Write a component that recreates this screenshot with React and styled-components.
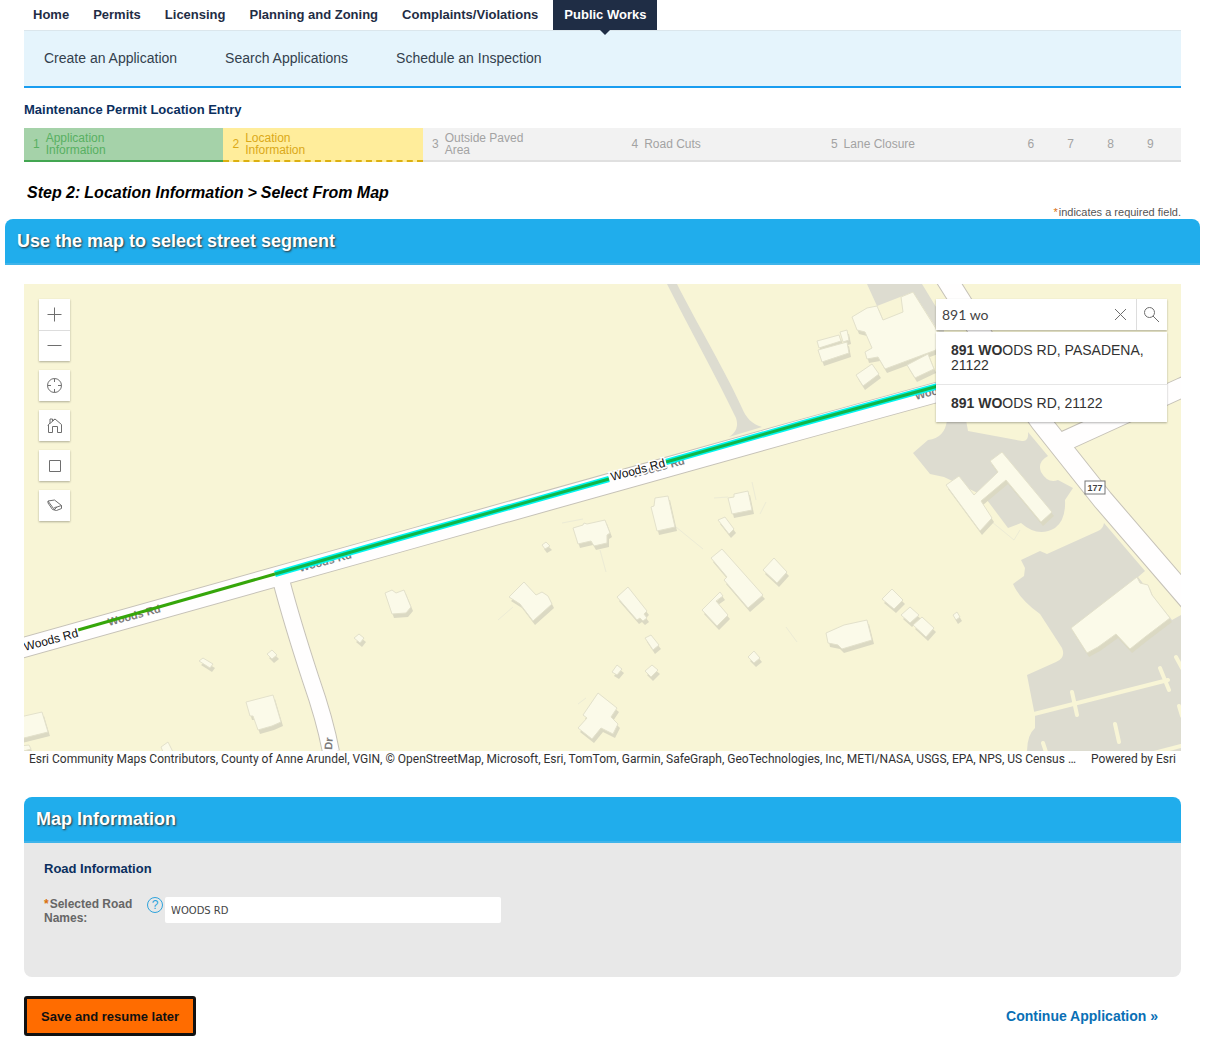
import { useState } from 'react';
// import styled components
import styled, { createGlobalStyle } from 'styled-components';

// page data
const tabs = ['Home', 'Permits', 'Licensing', 'Planning and Zoning', 'Complaints/Violations', 'Public Works'];
const links = ['Create an Application', 'Search Applications', 'Schedule an Inspection'];
const steps = [
  { label: 'Application Information', state: 'done' },
  { label: 'Location Information', state: 'current' },
  { label: 'Outside Paved Area' },
  { label: 'Road Cuts' },
  { label: 'Lane Closure' },
  {},
  {},
  {},
  {},
];
const suggestions = ['891 WOODS RD, PASADENA, 21122', '891 WOODS RD, 21122'];

// building footprints, in map units
const buildings = [
  '573,528 583,525 584,523 587,524 605,520 610,533 607,535 607,543 594,546 591,541 578,544',
  '655,498 668,496 675,527 657,531 651,507 654,506',
  '728,498 734,497 734,494 748,491 752,510 732,514',
  '718,520 725,517 734,529 729,534',
  '711,558 722,549 763,595 748,608 724,580 727,577',
  '763,570 774,558 787,572 777,583',
  '702,610 720,592 723,596 716,601 728,615 717,626',
  '509,597 524,582 536,595 542,592 548,596 552,604 533,621 520,604',
  '617,597 628,587 647,611 644,614 647,618 643,621 640,618 637,620',
  '645,638 651,635 659,645 653,650',
  '612,672 617,665 622,669 617,675',
  '645,671 652,665 658,670 651,677',
  '598,693 617,708 611,717 618,724 613,734 601,728 592,739 578,728 587,718 583,715',
  '542,545 546,542 550,546 545,549',
  '748,657 754,651 760,658 754,663',
  '385,593 392,590 396,593 404,590 411,607 406,613 392,614',
  '199,661 203,658 213,664 210,668',
  '267,654 272,650 277,655 272,659',
  '354,638 359,634 364,638 360,643',
  '246,702 273,695 281,722 272,726 258,730 253,716 250,716',
  '20,717 42,712 48,732 20,739',
  '161,747 168,742 173,752 163,752',
  '20,746 29,745 31,749 20,752',
  '826,633 844,625 867,620 872,640 842,649 838,645 828,643',
  '882,599 892,589 903,600 894,609',
  '901,615 910,607 919,615 910,623',
  '913,625 922,617 934,628 926,637',
  '953,615 957,612 960,617 956,620',
  '1071,628 1137,577 1140,583 1148,585 1152,595 1170,618 1145,637 1130,649 1116,634 1098,647 1087,653',
  '852,317 867,308 877,306 883,320 903,312 901,297 913,292 940,335 936,350 885,369 878,357 867,359 865,352 872,348 865,332 857,330',
  '907,365 928,354 934,369 915,378',
  '856,375 872,364 879,374 863,386',
  '817,341 839,335 841,341 819,348',
  '818,350 847,342 849,353 822,362',
  '840,332 847,330 849,340 843,342',
  '946,485 959,476 974,495 998,472 990,461 1002,452 1052,512 1041,522 1006,480 981,501 992,518 980,531',
];

const roads = [
  { d: 'M1200 380L1181 388L1067 440L1056 446', width: 19 },
  { d: 'M281 580Q292 622 311 680Q325 720 331 752', width: 16 },
  { d: 'M0 654L400 542L800 430L960 386L1000 374', width: 19 },
  { d: 'M946 278L1000 364L1041 422L1103 500L1190 601', width: 20 },
];

const StreetMap = () => {
  return (
    <MapSvg viewBox="24 284 1157 467" preserveAspectRatio="xMidYMid slice" role="img" aria-label="Street map">
      <rect x="0" y="200" width="1300" height="640" fill="#f8f5d6" />
      {/* paved lots */}
      <g fill="#dddcd0">
        <path d="M867 284H922L944 320V340L913 292L877 306Z" />
        <path d="M947 420H966L968 431L1022 441Q1029 442 1028 432L1048 456Q1037 462 1041 472Q1048 484 1058 480L1073 488L1065 500Q1066 520 1055 528Q1038 538 1021 523L1008 528L984 496L944 477L930 474L913 453L928 440Q945 438 947 420Z" />
        <path d="M1104 523L1145 571L1138 577L1160 605L1172 620L1181 615V752H1027Q1027 735 1035 728L1035 716L1027 675L1056 662Q1066 658 1062 648L1040 614Q1020 600 1013 584L1024 576L1025 568L1021 560L1040 551L1047 554L1098 531Q1103 529 1104 523Z" />
        <path d="M667 284H677C694 318 728 376 742 408C746 418 752 424 762 427L729 437Q740 430 736 418C716 376 688 326 667 284Z" />
      </g>
      <g fill="none" stroke="#f8f5d6" strokeWidth="4" strokeLinecap="round">
        <path d="M1034 714L1168 680M1072 692L1077 715M1160 668L1169 690M1115 724L1119 742M1043 743L1046 752M1176 657L1182 668M1150 754L1181 746M1179 706L1182 716" />
      </g>
      {/* thin driveways */}
      <g fill="none" stroke="#ecebd5">
        <path d="M676 527L703 549M600 550L606 572M513 607L498 620M562 523L583 519M786 627L797 642M714 498L728 497M752 482L756 500M766 502L760 514M992 522L1014 540L1020 530M578 704L586 698" />
      </g>
      <g fill="#dbd9c3">
        {buildings.map((points) => (
          <polygon points={points} key={points} transform="translate(2 4)" />
        ))}
      </g>
      <g fill="#fbfae9" stroke="#e3e1cb">
        {buildings.map((points) => (
          <polygon points={points} key={points} />
        ))}
      </g>
      <g fill="none" stroke="#c6c2b8">
        {roads.map((road) => (
          <path d={road.d} strokeWidth={road.width + 2} key={road.d} />
        ))}
      </g>
      <g fill="none" stroke="#fffefe">
        {roads.map((road) => (
          <path d={road.d} strokeWidth={road.width} key={road.d} />
        ))}
      </g>
      <RoadLabel>
        <text transform="translate(109 626) rotate(-15)">Woods Rd</text>
        <text transform="translate(300 572) rotate(-15)">Woods Rd</text>
        <text transform="translate(633 478) rotate(-15)">Woods Rd</text>
        <text transform="translate(916 400) rotate(-15)">Woods Rd</text>
        <text transform="translate(332 750) rotate(-86)">Dr</text>
      </RoadLabel>
      <rect x="1085" y="481" width="20" height="13" fill="#fff" stroke="#777" />
      <Shield x="1095" y="491">177</Shield>
      {/* street segments, the selected one on a cyan band */}
      <g fill="none">
        <path d="M275 574L400 538L609 479M666 462L800 424L960 380" stroke="#00f5f0" strokeWidth="6" />
        <path d="M78 630L275 574" stroke="#36a60a" strokeWidth="3" />
        <path d="M275 574L400 538L609 479M666 462L800 424L960 380" stroke="#12b548" strokeWidth="3" />
      </g>
      <SegmentLabel>
        <text transform="translate(25 651) rotate(-15)">Woods Rd</text>
        <text transform="translate(612 481) rotate(-15)">Woods Rd</text>
      </SegmentLabel>
    </MapSvg>
  );
};

// map tool icons
const Icon = ({ d }) => (
  <IconSvg viewBox="0 0 16 16" aria-hidden="true">
    <path d={d} />
  </IconSvg>
);
const icons = {
  plus: 'M7.5 0.5V14.5M0.5 7.5H14.5',
  minus: 'M0.5 7.5H14.5',
  locate: 'M14.5 7.5A7 7 0 1 1 0.5 7.5A7 7 0 1 1 14.5 7.5M7.5 0.5V4M7.5 11V14.5M0.5 7.5H4M11 7.5H14.5',
  home: 'M1.5 7V14.5H5.5V8.5H10.5V14.5H14.5V6.5L8 1L5.5 3V1H3V5L0.8 7.5M3 5.5L8 1',
  square: 'M2.5 2.5H13.5V13.5H2.5Z',
  eraser: 'M1 3L7.5 2L14.5 7.5L10 9Q8 9 6.5 10.5ZM14.5 7.5V10.5L9.5 12.5L5.5 11.5L1 5V3M10 9L7 12',
  close: 'M2 2L13 13M13 2L2 13',
  search: 'M10.5 5.5A5 5 0 1 1 0.5 5.5A5 5 0 1 1 10.5 5.5M9 9L15 15',
};

const App = () => {
  const [query, setQuery] = useState('891 wo');
  const [road, setRoad] = useState('WOODS RD');

  return (
    <>
      <GlobalStyle />
      <Page>
        <Tabs>
          {tabs.map((tab) => (
            <Tab href="#" $active={tab === 'Public Works'} key={tab}>{tab}</Tab>
          ))}
        </Tabs>
        <SubNav>
          {links.map((link) => (
            <a href="#" key={link}>{link}</a>
          ))}
        </SubNav>
        <PageTitle>Maintenance Permit Location Entry</PageTitle>
        <Steps>
          {steps.map((step, i) => (
            <Step $state={step.state} $short={!step.label} key={i}>
              <span>{i + 1}</span>
              {step.label && <StepLabel>{step.label}</StepLabel>}
            </Step>
          ))}
        </Steps>
        <StepTitle>
          <span>Step 2:</span>
          <span>Location Information</span>
          <span>&gt;</span>
          <span>Select From Map</span>
        </StepTitle>
        <Required><Star>*</Star><span>indicates a required field.</span></Required>
        <MapBar>Use the map to select street segment</MapBar>

        <MapBox>
          <StreetMap />
          <Tools>
            <ToolGroup>
              <Tool aria-label="Zoom in"><Icon d={icons.plus} /></Tool>
              <Tool aria-label="Zoom out"><Icon d={icons.minus} /></Tool>
            </ToolGroup>
            <ToolGroup><Tool aria-label="Find my location"><Icon d={icons.locate} /></Tool></ToolGroup>
            <ToolGroup><Tool aria-label="Default map view"><Icon d={icons.home} /></Tool></ToolGroup>
            <ToolGroup><Tool aria-label="Select by rectangle"><Icon d={icons.square} /></Tool></ToolGroup>
            <ToolGroup><Tool aria-label="Clear selection"><Icon d={icons.eraser} /></Tool></ToolGroup>
          </Tools>
          <Search>
            <SearchRow>
              <SearchInput aria-label="Search" value={query} onChange={(e) => setQuery(e.target.value)} />
              <Tool aria-label="Clear search" onClick={() => setQuery('')}><Icon d={icons.close} /></Tool>
              <SearchButton aria-label="Search"><Icon d={icons.search} /></SearchButton>
            </SearchRow>
            <Suggestions>
              {suggestions.map((item) => (
                <li key={item}>
                  <Suggestion><b>{item.slice(0, 6)}</b>{item.slice(6)}</Suggestion>
                </li>
              ))}
            </Suggestions>
          </Search>
        </MapBox>
        <Attribution>
          <p>
            Esri Community Maps Contributors, County of Anne Arundel, VGIN, © OpenStreetMap, Microsoft, Esri, TomTom,
            Garmin, SafeGraph, GeoTechnologies, Inc, METI/NASA, USGS, EPA, NPS, US Census Bureau, USDA, USFWS
          </p>
          <span>Powered by Esri</span>
        </Attribution>

        <Panel>
          <Bar>Map Information</Bar>
          <PanelBody>
            <h3>Road Information</h3>
            <Field>
              <label htmlFor="road"><Star>*</Star>Selected Road Names:</label>
              <Help aria-label="Help">?</Help>
              <RoadInput id="road" value={road} onChange={(e) => setRoad(e.target.value)} />
            </Field>
          </PanelBody>
        </Panel>
        <Actions>
          <SaveButton>Save and resume later</SaveButton>
          <Continue href="#">Continue Application »</Continue>
        </Actions>
      </Page>
    </>
  );
};

// styled components
const GlobalStyle = createGlobalStyle`
  * {
    box-sizing: border-box;
    margin: 0;
    padding: 0;
  }
  body {
    background: #fff;
    font-family: "Liberation Sans", Arial, sans-serif;
    color: #333;
  }
  a {
    text-decoration: none;
    color: inherit;
  }
  button {
    border: none;
    font-family: inherit;
    cursor: pointer;
  }
`;

const Page = styled.div`
  padding: 0 27px 5px 24px;
`;
const Tabs = styled.nav`
  display: flex;
  gap: 6px;
`;
const Tab = styled.a`
  position: relative;
  padding: 0 ${(props) => (props.$active ? '11px' : '9px')};
  font-size: 13px;
  font-weight: bold;
  line-height: 30px;
  color: ${(props) => (props.$active ? '#fff' : '#1f2d45')};
  background: ${(props) => (props.$active ? '#1f2d45' : 'none')};
  &::after {
    content: "";
    display: ${(props) => (props.$active ? 'block' : 'none')};
    position: absolute;
    top: 100%;
    left: 50%;
    margin-left: -5px;
    border: 5px solid transparent;
    border-top-color: #1f2d45;
  }
`;
const SubNav = styled.nav`
  display: flex;
  gap: 48px;
  padding: 0 20px;
  font-size: 14px;
  line-height: 55px;
  color: #333f4d;
  background: #e5f4fc;
  border-top: 1px solid #dbe6ec;
  border-bottom: 2px solid #199df0;
`;
const PageTitle = styled.h1`
  padding: 12px 0 8px;
  font-size: 13px;
  line-height: 20px;
  color: #0b2f5e;
`;

const stepColors = {
  done: { back: '#a5d2a9', text: '#58b062', line: 'solid #43a651' },
  current: { back: '#ffed9b', text: '#dba918', line: 'dashed #dcb010' },
};
const idle = { back: '#f2f2f2', text: '#a3a3a3', line: 'solid #e0e0e0' };

const Steps = styled.ol`
  display: grid;
  grid-template-columns: repeat(5, 5fr) repeat(4, 1fr);
  list-style: none;
`;
const Step = styled.li`
  display: flex;
  align-items: center;
  gap: 6px;
  height: 34px;
  padding-left: ${(props) => (props.$short ? '6px' : '9px')};
  font-size: 12px;
  line-height: 12px;
  color: ${(props) => (stepColors[props.$state] || idle).text};
  background: ${(props) => (stepColors[props.$state] || idle).back};
  border-bottom: 2px ${(props) => (stepColors[props.$state] || idle).line};
`;
const StepLabel = styled.span`
  max-width: 90px;
`;
const StepTitle = styled.h2`
  display: flex;
  gap: 4px;
  padding: 21px 3px 0;
  font-size: 16px;
  font-style: italic;
  line-height: 20px;
  color: #000;
`;
const Required = styled.p`
  display: flex;
  justify-content: flex-end;
  gap: 1px;
  padding-top: 3px;
  font-size: 11px;
  line-height: 13px;
  color: #555;
`;
const Star = styled.span`
  color: #d9700f;
`;

const Bar = styled.h2`
  padding: 0 12px;
  font-size: 18px;
  line-height: 44px;
  color: #fff;
  text-shadow: 1px 1px 2px #333;
  background: #20adec;
  border-bottom: 2px solid #3fb4ea;
  border-radius: 8px 8px 0 0;
`;
const MapBar = styled(Bar)`
  margin: 0 -19px 19px;
`;

const MapBox = styled.div`
  position: relative;
`;
const MapSvg = styled.svg`
  display: block;
  width: 100%;
  height: 467px;
`;
const RoadLabel = styled.g`
  font-size: 11px;
  font-weight: bold;
  fill: #7d7b7b;
`;
const SegmentLabel = styled.g`
  font-size: 12px;
  fill: #111;
  stroke: #fff;
  stroke-width: 3px;
  paint-order: stroke;
`;
const Shield = styled.text`
  font-size: 9px;
  font-weight: bold;
  text-anchor: middle;
  fill: #444;
`;

const IconSvg = styled.svg`
  display: block;
  width: 16px;
  height: 16px;
  fill: none;
  stroke: #6e6e6e;
`;
const Tools = styled.div`
  position: absolute;
  top: 15px;
  left: 15px;
  display: grid;
  gap: 9px;
`;
const ToolGroup = styled.div`
  display: grid;
  box-shadow: 0 1px 2px rgba(0, 0, 0, 0.3);
  button + button {
    border-top: 1px solid #ddd;
  }
`;
const Tool = styled.button`
  display: grid;
  place-items: center;
  width: 31px;
  height: 31px;
  background: #fff;
`;

const Search = styled.div`
  position: absolute;
  top: 15px;
  right: 14px;
  width: 231px;
`;
const SearchRow = styled.div`
  display: flex;
  background: #fff;
  box-shadow: 0 1px 2px rgba(0, 0, 0, 0.3);
`;
const SearchInput = styled.input`
  flex: 1;
  min-width: 0;
  padding: 0 6px;
  border: none;
  outline: none;
  font-family: Lato, sans-serif;
  font-size: 14px;
  color: #444;
`;
const SearchButton = styled(Tool)`
  border-left: 1px solid #ddd;
`;
const Suggestions = styled.ul`
  margin-top: 2px;
  list-style: none;
  background: #fff;
  box-shadow: 0 1px 2px rgba(0, 0, 0, 0.3);
  li + li {
    border-top: 1px solid #e6e6e6;
  }
`;
const Suggestion = styled.button`
  width: 100%;
  padding: 11px 15px;
  font-size: 14px;
  line-height: 15px;
  text-align: left;
  color: #323232;
  background: none;
`;

const Attribution = styled.div`
  display: flex;
  gap: 13px;
  padding: 0 5px;
  font-family: Roboto, "Liberation Sans", sans-serif;
  font-size: 12px;
  line-height: 16px;
  color: #323232;
  p {
    flex: 1;
    overflow: hidden;
    text-overflow: ellipsis;
    white-space: nowrap;
  }
`;

const Panel = styled.section`
  margin-top: 30px;
`;
const PanelBody = styled.div`
  padding: 16px 20px 52px;
  background: #e8e8e8;
  border-radius: 0 0 8px 8px;
  h3 {
    font-size: 13px;
    line-height: 20px;
    color: #0b2f5e;
  }
`;
const Field = styled.div`
  display: flex;
  align-items: flex-start;
  padding-top: 18px;
  label {
    width: 103px;
    padding-right: 10px;
    font-size: 12px;
    font-weight: bold;
    line-height: 14px;
    color: #666;
  }
  ${Star} {
    margin-right: 1px;
  }
`;
const Help = styled.button`
  width: 16px;
  height: 16px;
  border: 1px solid #2ea3dc;
  border-radius: 50%;
  font-size: 12px;
  line-height: 14px;
  color: #2ea3dc;
  background: none;
`;
const RoadInput = styled.input`
  width: 336px;
  height: 26px;
  margin-left: 2px;
  padding: 0 6px;
  border: none;
  border-radius: 2px;
  font-family: "DejaVu Sans", Verdana, sans-serif;
  font-size: 10px;
  color: #444;
`;

const Actions = styled.div`
  display: flex;
  align-items: center;
  justify-content: space-between;
  padding: 19px 23px 0 0;
`;
const SaveButton = styled.button`
  height: 40px;
  padding: 0 14px;
  border: 3px solid #111;
  border-radius: 3px;
  font-size: 13px;
  font-weight: bold;
  color: #111;
  background: #ff6c00;
`;
const Continue = styled.a`
  font-size: 14px;
  font-weight: bold;
  color: #0a6fb5;
`;

export default App;
